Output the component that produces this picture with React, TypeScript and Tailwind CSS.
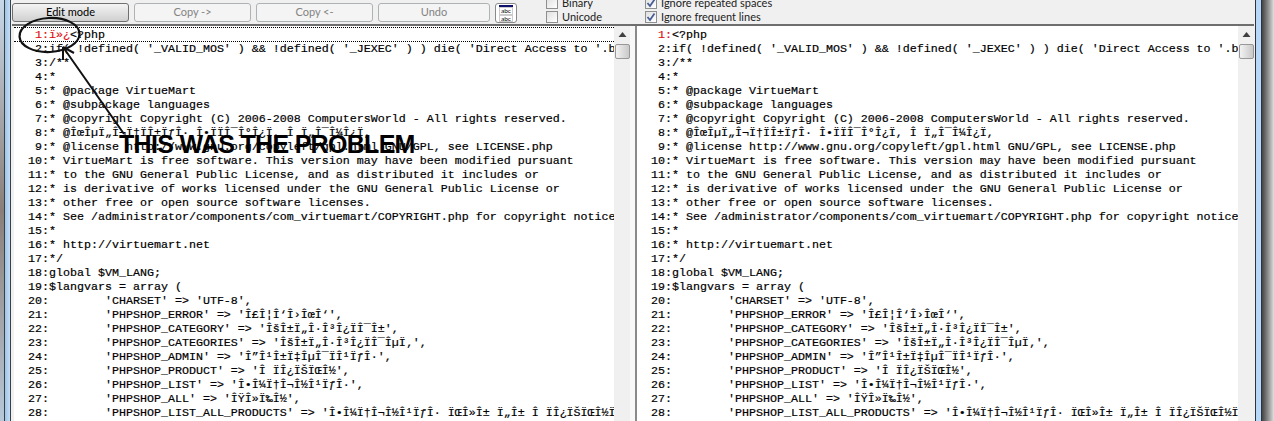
import React from "react";

const codeFont = { fontFamily: '"Liberation Mono", monospace' };

const commonLines = [
  "if( !defined( '_VALID_MOS' ) && !defined( '_JEXEC' ) ) die( 'Direct Access to '.basename(__FILE__).' is not allowed.' );",
  "/**",
  "*",
  "* @package VirtueMart",
  "* @subpackage languages",
  "* @copyright Copyright (C) 2006-2008 ComputersWorld - All rights reserved.",
  "* @ÎœÎµÏ„Î¬Ï†ÏÎ±ÏƒÎ· Î•ÏÏÎ¯Î°Î¿Ï, Î Ï„Î¯Î¼Î¿Ï,",
  "* @license http://www.gnu.org/copyleft/gpl.html GNU/GPL, see LICENSE.php",
  "* VirtueMart is free software. This version may have been modified pursuant",
  "* to the GNU General Public License, and as distributed it includes or",
  "* is derivative of works licensed under the GNU General Public License or",
  "* other free or open source software licenses.",
  "* See /administrator/components/com_virtuemart/COPYRIGHT.php for copyright notices and details.",
  "*",
  "* http://virtuemart.net",
  "*/",
  "global $VM_LANG;",
  "$langvars = array (",
  "        'CHARSET' => 'UTF-8',",
  "        'PHPSHOP_ERROR' => 'Î£Î¦Î‘Î›ÎœÎ‘',",
  "        'PHPSHOP_CATEGORY' => 'ÎšÎ±Ï„Î·Î³Î¿ÏÎ¯Î±',",
  "        'PHPSHOP_CATEGORIES' => 'ÎšÎ±Ï„Î·Î³Î¿ÏÎ¯ÎµÏ‚',",
  "        'PHPSHOP_ADMIN' => 'Î”Î¹Î±Ï‡ÎµÎ¯ÏÎ¹ÏƒÎ·',",
  "        'PHPSHOP_PRODUCT' => 'Î ÏÎ¿ÏŠÏŒÎ½',",
  "        'PHPSHOP_LIST' => 'Î•Î¼Ï†Î¬Î½Î¹ÏƒÎ·',",
  "        'PHPSHOP_ALL' => 'ÎŸÎ»Ï‰Î½',",
  "        'PHPSHOP_LIST_ALL_PRODUCTS' => 'Î•Î¼Ï†Î¬Î½Î¹ÏƒÎ· ÏŒÎ»Î± Ï„Î± Î ÏÎ¿ÏŠÏŒÎ½Ï„Î±',",
];

const toolButtons = [
  { label: "Edit mode", width: "w-[117px]", active: true },
  { label: "Copy ->", width: "w-[117px]", active: false },
  { label: "Copy <-", width: "w-[117px]", active: false },
  { label: "Undo", width: "w-[112px]", active: false },
];

const ToolButton = ({ label, width, active }: { label: string; width: string; active: boolean }) => (
  <div
    className={`${width} h-[19px] flex items-center justify-center rounded-[3px] border text-[11px] ${
      active
        ? "border-[#707070] bg-gradient-to-b from-[#f4f4f4] to-[#d0d0d0] text-black"
        : "border-[#adb2b5] bg-[#f4f4f4] text-[#838383]"
    }`}
  >
    {label}
  </div>
);

const CheckOption = ({ label, checked }: { label: string; checked?: boolean }) => (
  <div className="flex items-center gap-[4px] h-[14px] text-[11px] text-[#222]">
    <div className="w-[12px] h-[12px] border border-[#8e8f8f] bg-gradient-to-br from-[#e0e0e0] to-white flex items-center justify-center">
      {checked && (
        <svg width="10" height="10" viewBox="0 0 10 10">
          <path d="M1.5 5 L4 8 L8.5 1.5" fill="none" stroke="#4a5f97" strokeWidth="1.8" />
        </svg>
      )}
    </div>
    <span>{label}</span>
  </div>
);

const ScrollBar = () => (
  <div className="w-[16px] shrink-0 bg-[#f0f0f0] flex flex-col items-center pt-[6px]">
    <svg width="9" height="5" viewBox="0 0 9 5">
      <path d="M4.5 0 L8.5 5 L0.5 5 Z" fill="#404040" />
    </svg>
    <div className="mt-[7px] w-[15px] h-[15px] rounded-[2px] border border-[#979797] bg-gradient-to-r from-[#f2f2f2] to-[#c9c9c9]" />
  </div>
);

const CodePane = ({ left }: { left: boolean }) => (
  <div className="flex-1 flex min-w-0 bg-white">
    <div className="flex-1 min-w-0 overflow-hidden pt-[1px] text-[11.67px] leading-[14px] text-black whitespace-pre [-webkit-text-stroke:0.2px_#000]" style={codeFont}>
      {left ? (
        <div className="h-[15px] border-y border-dotted border-black pl-[14px]">
          <span className="text-[#e01010] [-webkit-text-stroke:0.2px_#e01010]">{" 1:ï»¿"}</span>
          {"<?php"}
        </div>
      ) : (
        <div className="h-[15px] pl-[14px] pt-[1px]">
          <span className="text-[#e01010] [-webkit-text-stroke:0.2px_#e01010]">{" 1:"}</span>
          {"<?php"}
        </div>
      )}
      {commonLines.map((line, index) => (
        <div key={index} className="h-[14px] pl-[14px]">
          {String(index + 2).padStart(2, " ")}:{line}
        </div>
      ))}
    </div>
    <ScrollBar />
  </div>
);

export default function App() {
  return (
    <div className="relative flex w-[1274px] h-[421px] overflow-hidden bg-[#f0f0f0]" style={{ fontFamily: 'Lato, sans-serif' }}>
      <div className="w-[4px] shrink-0 bg-gradient-to-b from-[#c8d8e8] via-[#8a7f78] to-[#b8c8d8]" />
      <div className="w-[7px] shrink-0 border-x border-[#3a4048] bg-gradient-to-r from-[#9ec4e8] to-[#c4def5]" />
      <div className="w-[1263px] flex">
        <div className="w-[1244px] shrink-0 flex flex-col pl-[1px] pr-[1px]">
          <div className="h-[26px] shrink-0 flex border-b-2 border-[#6e6e6e] overflow-hidden">
            <div className="flex items-start gap-[5px] pt-[3px]">
              {toolButtons.map((b) => (
                <ToolButton key={b.label} {...b} />
              ))}
              <div className="w-[22px] h-[20px] rounded-[3px] border border-[#8a8a8a] bg-white px-[3px] py-[1px] flex flex-col">
                <div className="h-[2px] shrink-0 bg-[#10106e]" />
                <div className="h-[8px] shrink-0 text-[6.5px] leading-[6px] text-black text-center border border-[#ccc]">abc</div>
                <div className="h-[7px] shrink-0 text-[6.5px] leading-[5px] text-black text-center border border-[#ccc]">abc</div>
              </div>
            </div>
            <div className="ml-[29px] w-[99px] -mt-[4px] flex flex-col">
              <CheckOption label="Binary" />
              <CheckOption label="Unicode" />
            </div>
            <div className="-mt-[4px] flex flex-col">
              <CheckOption label="Ignore repeated spaces" checked />
              <CheckOption label="Ignore frequent lines" checked />
            </div>
          </div>
          <div className="flex-1 flex min-h-0">
            <div className="w-[618px] shrink-0 flex border-l-2 border-[#f0f0f0]"><CodePane left /></div>
            <div className="w-[7px] shrink-0 bg-[#f8f8f8] border-r-2 border-[#8a8a8a]" />
            <CodePane left={false} />
          </div>
        </div>
        <div className="w-[1px] shrink-0 bg-[#2f3540]" />
        <div className="w-[5px] shrink-0 bg-[#b8d8f8]" />
        <div className="w-[1px] shrink-0 bg-[#2f3540]" />
        <div className="flex-1 bg-gradient-to-r from-[#444] to-[#e0e0e0]" />
      </div>
      <svg className="absolute left-0 top-0 pointer-events-none" width="1274" height="421">
        <ellipse cx="49.5" cy="35" rx="30" ry="17" transform="rotate(-3 49.5 35)" fill="none" stroke="#111" strokeWidth="2.2" />
        <path d="M124 134 L63 47 M63 47 L63 60 M63 47 L74 53" fill="none" stroke="#111" strokeWidth="2" />
      </svg>
      <div className="absolute left-[119px] top-[131px] text-[25px] leading-[26px] font-bold text-black whitespace-nowrap tracking-[-0.7px]" style={{ fontFamily: '"Liberation Sans", sans-serif' }}>
        THIS WAS THE PROBLEM
      </div>
    </div>
  );
}
